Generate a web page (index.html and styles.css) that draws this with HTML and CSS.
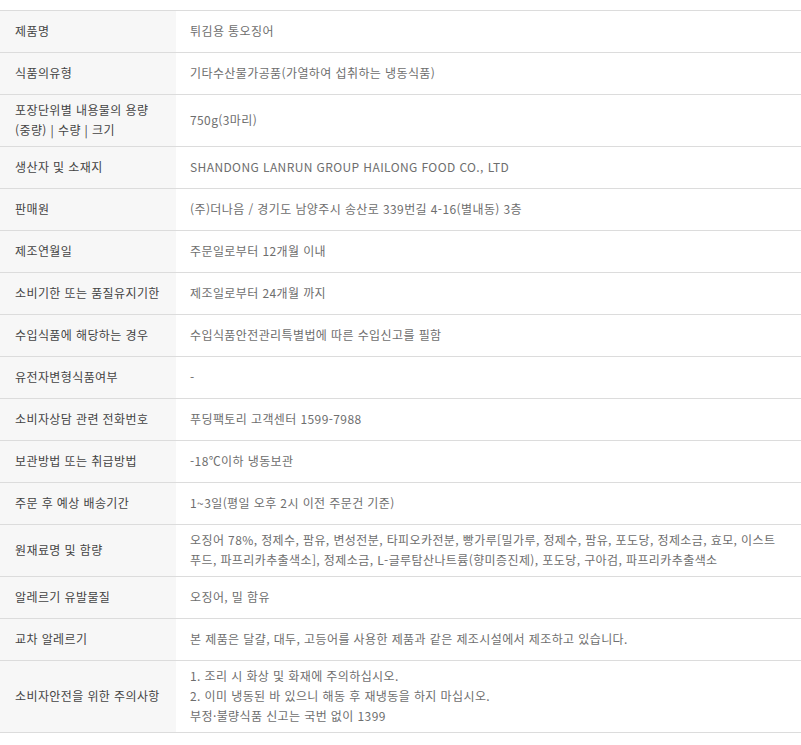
FILE: index.html
```html
<!DOCTYPE html>
<html lang="ko">
<head>
<meta charset="utf-8">
<title>상품정보제공고시</title>
<link rel="stylesheet" href="styles.css">
</head>
<body>
<div class="wrap">
<table class="info">
<tbody>
<tr><th>제품명</th><td>튀김용 통오징어</td></tr>
<tr><th>식품의유형</th><td>기타수산물가공품(가열하여 섭취하는 냉동식품)</td></tr>
<tr><th>포장단위별 내용물의 용량<br>(중량) | 수량 | 크기</th><td>750g(3마리)</td></tr>
<tr><th>생산자 및 소재지</th><td>SHANDONG LANRUN GROUP HAILONG FOOD CO., LTD</td></tr>
<tr><th>판매원</th><td>(주)더나음 / 경기도 남양주시 송산로 339번길 4-16(별내동) 3층</td></tr>
<tr><th>제조연월일</th><td>주문일로부터 12개월 이내</td></tr>
<tr><th>소비기한 또는 품질유지기한</th><td>제조일로부터 24개월 까지</td></tr>
<tr><th>수입식품에 해당하는 경우</th><td>수입식품안전관리특별법에 따른 수입신고를 필함</td></tr>
<tr><th>유전자변형식품여부</th><td>-</td></tr>
<tr><th>소비자상담 관련 전화번호</th><td>푸딩팩토리 고객센터 1599-7988</td></tr>
<tr><th>보관방법 또는 취급방법</th><td>-18℃이하 냉동보관</td></tr>
<tr><th>주문 후 예상 배송기간</th><td>1~3일(평일 오후 2시 이전 주문건 기준)</td></tr>
<tr><th>원재료명 및 함량</th><td>오징어 78%, 정제수, 팜유, 변성전분, 타피오카전분, 빵가루[밀가루, 정제수, 팜유, 포도당, 정제소금, 효모, 이스트<br>푸드, 파프리카추출색소], 정제소금, L-글루탐산나트륨(향미증진제), 포도당, 구아검, 파프리카추출색소</td></tr>
<tr><th>알레르기 유발물질</th><td>오징어, 밀 함유</td></tr>
<tr><th>교차 알레르기</th><td>본 제품은 달걀, 대두, 고등어를 사용한 제품과 같은 제조시설에서 제조하고 있습니다.</td></tr>
<tr><th>소비자안전을 위한 주의사항</th><td>1. 조리 시 화상 및 화재에 주의하십시오.<br>2. 이미 냉동된 바 있으니 해동 후 재냉동을 하지 마십시오.<br>부정·불량식품 신고는 국번 없이 1399</td></tr>
</tbody>
</table>
</div>
</body>
</html>
```

FILE: styles.css
```css
html, body {
  margin: 0;
  padding: 0;
  background: #fff;
}
.wrap {
  padding-top: 10px;
}
.info {
  width: 801px;
  border-collapse: collapse;
  table-layout: fixed;
  font-family: "Noto Sans CJK KR", "Noto Sans", sans-serif;
  font-size: 12px;
  line-height: 20px;
  letter-spacing: 0.4px;
}
.info tr {
  border-top: 1px solid #dcdcdc;
  border-bottom: 1px solid #dcdcdc;
}
.info th,
.info td {
  height: 30px;
  padding: 5px 0 6px;
  vertical-align: middle;
  text-align: left;
  font-weight: normal;
  white-space: nowrap;
}
.info th {
  width: 161px;
  padding-left: 15px;
  background: #f7f7f7;
  color: #444;
}
.info td {
  padding-left: 14px;
  color: #6e6e6e;
}
```
